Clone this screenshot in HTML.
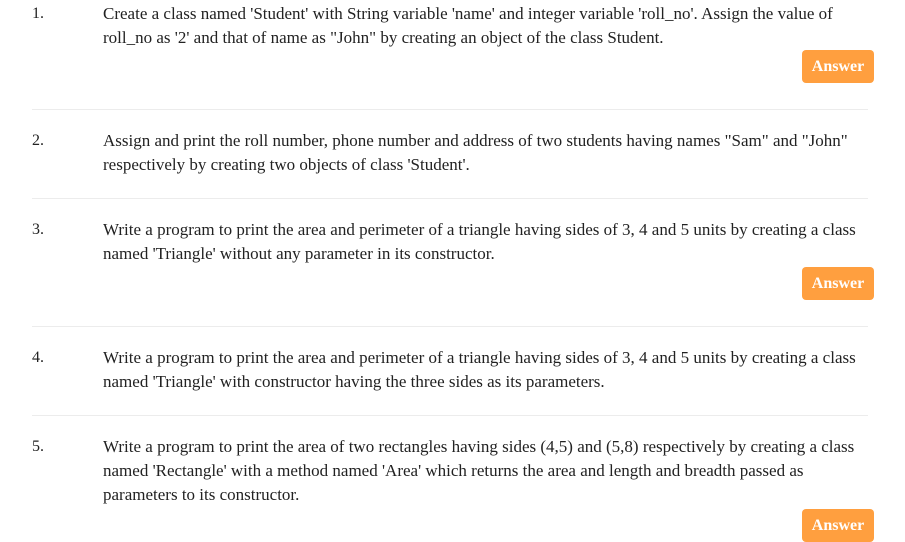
<!DOCTYPE html>
<html><head><style>
body{margin:0;width:905px;height:511px;overflow:hidden;background:#fff;font-family:"Liberation Serif",serif;font-size:16px;color:#222;position:relative}
.n{position:absolute;left:32px;line-height:24px;font-size:16px}
.t{position:absolute;left:103px;width:790px;line-height:24px;font-size:17px;white-space:nowrap}
.b{position:absolute;left:802px;width:72px;height:33px;background:#ff9f3f;color:#fff;font-weight:bold;border-radius:4px;text-align:center;line-height:33px;font-size:16px}
.l{position:absolute;left:32px;width:836px;height:1px;background:#ececec}
</style></head><body>
<div class="n" style="top:2px">1.</div>
<div class="t" style="top:2px">Create a class named 'Student' with String variable 'name' and integer variable 'roll_no'. Assign the value of<br>roll_no as '2' and that of name as "John" by creating an object of the class Student.</div>
<div class="b" style="top:50px">Answer</div>
<div class="l" style="top:109px"></div>
<div class="n" style="top:129px">2.</div>
<div class="t" style="top:129px">Assign and print the roll number, phone number and address of two students having names "Sam" and "John"<br>respectively by creating two objects of class 'Student'.</div>
<div class="l" style="top:198px"></div>
<div class="n" style="top:218px">3.</div>
<div class="t" style="top:218px">Write a program to print the area and perimeter of a triangle having sides of 3, 4 and 5 units by creating a class<br>named 'Triangle' without any parameter in its constructor.</div>
<div class="b" style="top:267px">Answer</div>
<div class="l" style="top:326px"></div>
<div class="n" style="top:346px">4.</div>
<div class="t" style="top:346px">Write a program to print the area and perimeter of a triangle having sides of 3, 4 and 5 units by creating a class<br>named 'Triangle' with constructor having the three sides as its parameters.</div>
<div class="l" style="top:415px"></div>
<div class="n" style="top:435px">5.</div>
<div class="t" style="top:435px">Write a program to print the area of two rectangles having sides (4,5) and (5,8) respectively by creating a class<br>named 'Rectangle' with a method named 'Area' which returns the area and length and breadth passed as<br>parameters to its constructor.</div>
<div class="b" style="top:509px">Answer</div>
</body></html>
